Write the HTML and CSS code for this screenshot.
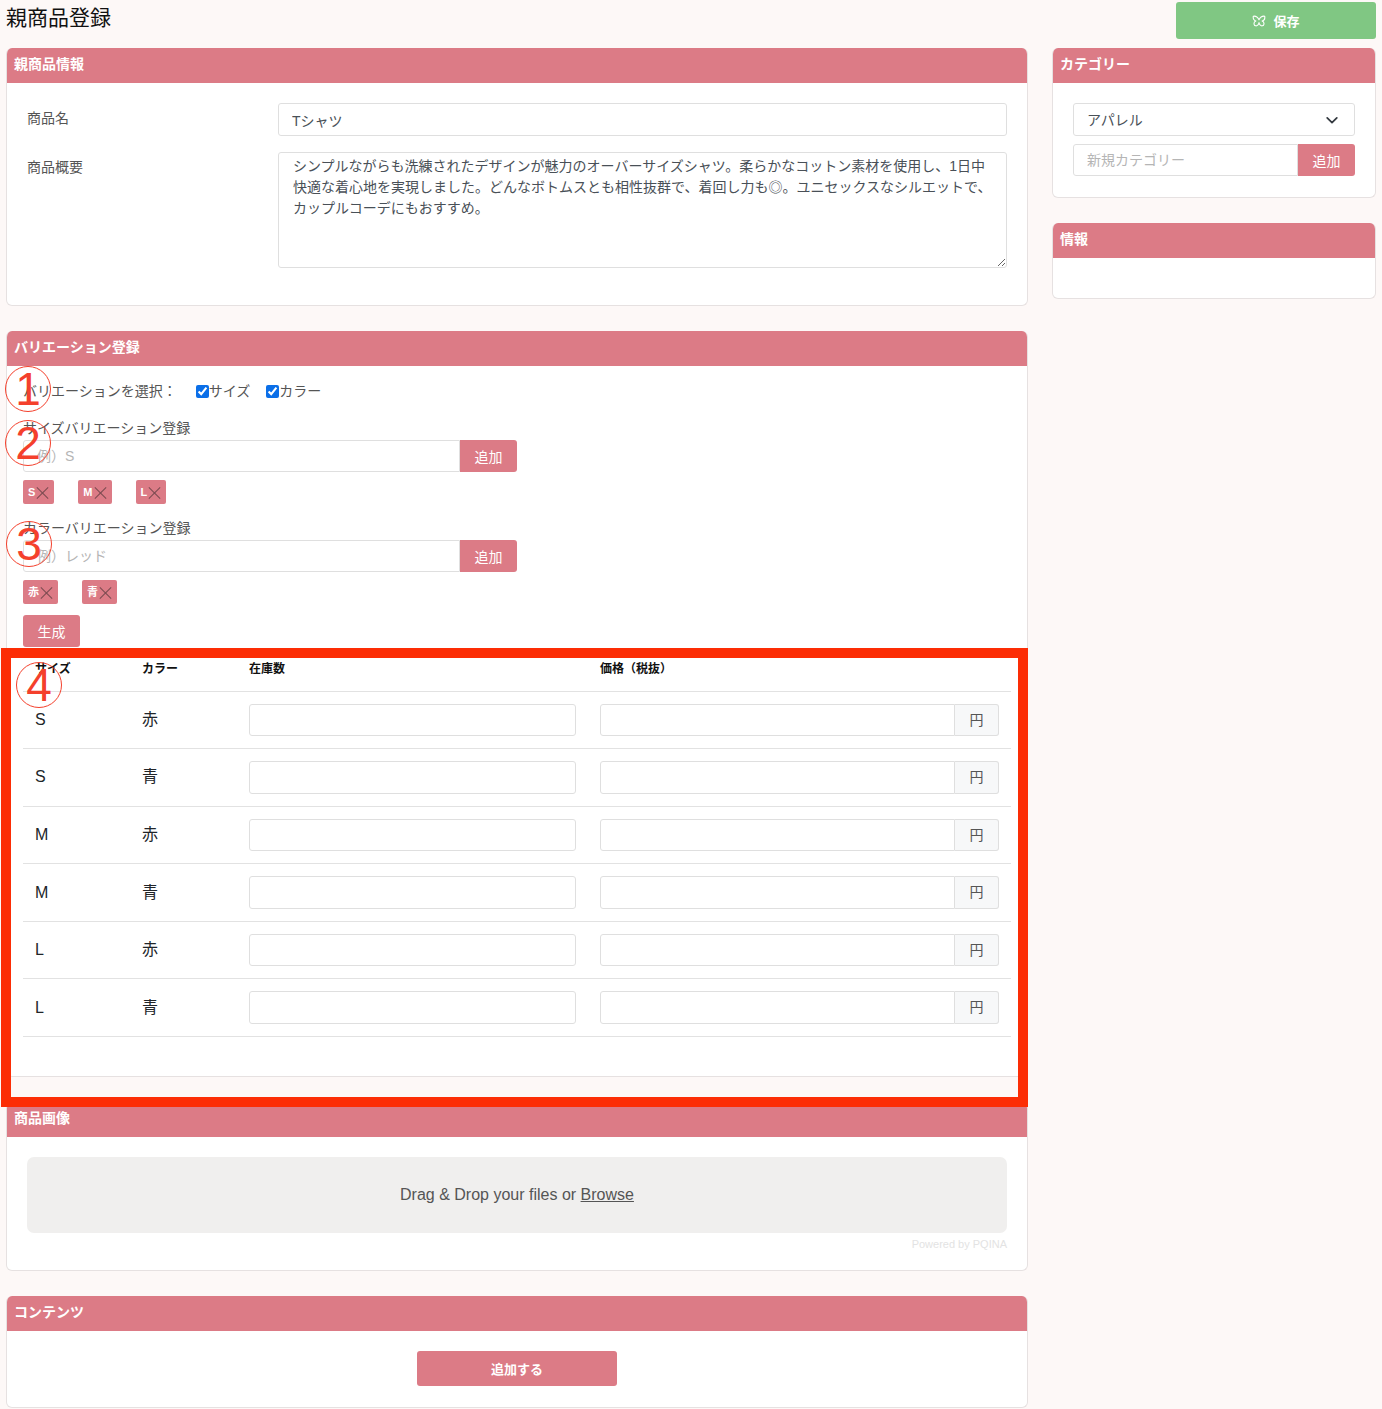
FILE: index.html
```html
<!DOCTYPE html>
<html lang="ja">
<head>
    <meta charset="UTF-8">
    <meta name="viewport" content="width=device-width, initial-scale=1.0">
    <title>親商品登録</title>
    <link rel="stylesheet" href="styles.css">
</head>
<body>
    <div class="page-top">
        <h1>親商品登録</h1>
        <button class="save-btn">
            <svg class="save-icon" viewBox="0 0 16 16" width="14" height="14" fill="none" stroke="currentColor" stroke-width="1.2" stroke-linejoin="round">
                <path d="M8 6.5C6.5 3.5 3.5 2.2 1.5 2.5 1 5 2 7.5 4.5 8 2.5 8.5 2 10 2.5 12c.5 1.8 2.8 2 4 .8.6-.6 1.2-1.8 1.5-3 .3 1.2.9 2.4 1.5 3 1.2 1.2 3.5 1 4-.8.5-2 0-3.500-2-4 2.500-.5 3.500-3 3-5.500-2-.3-5 1-6.500 4z"/>
            </svg>
            保存
        </button>
    </div>

    <div class="layout">
        <div class="main-col">
            <section class="card">
                <h2 class="card-head">親商品情報</h2>
                <div class="card-body info-body">
                    <div class="form-row name-row">
                        <label class="row-label">商品名</label>
                        <input class="field" type="text" value="Tシャツ">
                    </div>
                    <div class="form-row">
                        <label class="row-label">商品概要</label>
                        <textarea class="field summary">シンプルながらも洗練されたデザインが魅力のオーバーサイズシャツ。柔らかなコットン素材を使用し、1日中快適な着心地を実現しました。どんなボトムスとも相性抜群で、着回し力も◎。ユニセックスなシルエットで、カップルコーデにもおすすめ。</textarea>
                    </div>
                </div>
            </section>

            <section class="card">
                <h2 class="card-head">バリエーション登録</h2>
                <div class="card-body variation-body">
                    <div class="check-row">
                        <span class="check-title">バリエーションを選択：</span>
                        <label class="check-item"><input type="checkbox" checked>サイズ</label>
                        <label class="check-item"><input type="checkbox" checked>カラー</label>
                    </div>

                    <div class="group-label size-label">サイズバリエーション登録</div>
                    <div class="input-group">
                        <input class="field" type="text" placeholder="例）S">
                        <button class="add-btn">追加</button>
                    </div>
                    <div class="tags">
                        <span class="tag"><b>S</b><i class="cross"></i></span>
                        <span class="tag"><b>M</b><i class="cross"></i></span>
                        <span class="tag"><b>L</b><i class="cross"></i></span>
                    </div>

                    <div class="group-label color-label">カラーバリエーション登録</div>
                    <div class="input-group">
                        <input class="field" type="text" placeholder="例）レッド">
                        <button class="add-btn">追加</button>
                    </div>
                    <div class="tags">
                        <span class="tag"><b>赤</b><i class="cross"></i></span>
                        <span class="tag"><b>青</b><i class="cross"></i></span>
                    </div>

                    <button class="add-btn generate-btn">生成</button>

                    <table class="var-table">
                        <thead>
                            <tr>
                                <th class="col-size">サイズ</th>
                                <th class="col-color">カラー</th>
                                <th class="col-stock">在庫数</th>
                                <th>価格（税抜）</th>
                            </tr>
                        </thead>
                        <tbody>
                            <tr>
                                <td>S</td><td>赤</td>
                                <td><input class="field" type="text"></td>
                                <td><div class="price-group"><input class="field" type="text"><span class="yen">円</span></div></td>
                            </tr>
                            <tr>
                                <td>S</td><td>青</td>
                                <td><input class="field" type="text"></td>
                                <td><div class="price-group"><input class="field" type="text"><span class="yen">円</span></div></td>
                            </tr>
                            <tr>
                                <td>M</td><td>赤</td>
                                <td><input class="field" type="text"></td>
                                <td><div class="price-group"><input class="field" type="text"><span class="yen">円</span></div></td>
                            </tr>
                            <tr>
                                <td>M</td><td>青</td>
                                <td><input class="field" type="text"></td>
                                <td><div class="price-group"><input class="field" type="text"><span class="yen">円</span></div></td>
                            </tr>
                            <tr>
                                <td>L</td><td>赤</td>
                                <td><input class="field" type="text"></td>
                                <td><div class="price-group"><input class="field" type="text"><span class="yen">円</span></div></td>
                            </tr>
                            <tr>
                                <td>L</td><td>青</td>
                                <td><input class="field" type="text"></td>
                                <td><div class="price-group"><input class="field" type="text"><span class="yen">円</span></div></td>
                            </tr>
                        </tbody>
                    </table>
                </div>
            </section>

            <section class="card">
                <h2 class="card-head">商品画像</h2>
                <div class="card-body image-body">
                    <div class="dropzone">Drag &amp; Drop your files or <u>Browse</u></div>
                    <div class="powered">Powered by PQINA</div>
                </div>
            </section>

            <section class="card">
                <h2 class="card-head">コンテンツ</h2>
                <div class="card-body content-body">
                    <button class="add-content">追加する</button>
                </div>
            </section>
        </div>

        <aside class="side-col">
            <section class="card">
                <h2 class="card-head">カテゴリー</h2>
                <div class="card-body category-body">
                    <div class="select-box">
                        <span>アパレル</span>
                        <svg viewBox="0 0 16 16" width="14" height="14" fill="none" stroke="#343a40" stroke-width="2" stroke-linecap="round" stroke-linejoin="round"><path d="M2.500 5.500 8 11l5.500-5.500"/></svg>
                    </div>
                    <div class="input-group">
                        <input class="field" type="text" placeholder="新規カテゴリー">
                        <button class="add-btn">追加</button>
                    </div>
                </div>
            </section>
            <section class="card">
                <h2 class="card-head">情報</h2>
                <div class="card-body empty-body"></div>
            </section>
        </aside>
    </div>

    <!-- annotations over the screenshot -->
    <div class="note note-1">1</div>
    <div class="note note-2">2</div>
    <div class="note note-3">3</div>
    <div class="note note-4">4</div>
    <div class="note-frame"></div>
</body>
</html>
```

FILE: styles.css
```css
* {
    box-sizing: border-box;
}
body {
    font-family: "Liberation Sans", "Noto Sans CJK JP", sans-serif;
    font-size: 14px;
    line-height: 20px;
    color: #212529;
    margin: 0;
    padding: 2px 6px 0;
    background-color: #fdf8f7;
    position: relative;
}
.page-top {
    display: flex;
    justify-content: space-between;
    height: 46px;
}
h1 {
    font-size: 21px;
    font-weight: 400;
    line-height: 32px;
    margin: 0;
    color: #111;
}
.save-btn {
    width: 200px;
    height: 37px;
    display: flex;
    align-items: center;
    justify-content: center;
    gap: 7px;
    background-color: #80c783;
    color: #fff;
    border: none;
    border-radius: 3px;
    font: bold 13px "Liberation Sans", "Noto Sans CJK JP", sans-serif;
}
.layout {
    display: grid;
    grid-template-columns: 1022px 324px;
    gap: 24px;
    align-items: start;
}
.main-col,
.side-col {
    display: flex;
    flex-direction: column;
    gap: 25px;
}
.card {
    background-color: #fff;
    border: 1px solid #e6e1e1;
    border-top: none;
    border-radius: 6px;
    overflow: hidden;
}
.card-head {
    margin: 0 -1px;
    height: 35px;
    padding: 0 8px;
    font-size: 14px;
    font-weight: bold;
    line-height: 33px;
    color: #fff;
    background-color: #dc7b86;
}
.card-body {
    padding: 20px;
}
.field {
    width: 100%;
    height: 33px;
    padding: 0 13px;
    font: 14px "Liberation Sans", "Noto Sans CJK JP", sans-serif;
    color: #495057;
    background-color: #fff;
    border: 1px solid #dfdfdf;
    border-radius: 3px;
    outline: none;
}
.field::placeholder {
    color: #b5b5b5;
}

/* 親商品情報 */
.info-body {
    height: 222px;
}
.form-row {
    display: flex;
}
.name-row {
    margin-bottom: 16px;
}
.row-label {
    flex: 0 0 251px;
    line-height: 31px;
    color: #555;
}
.row-label:last-child {
    line-height: 20px;
}
.summary {
    display: block;
    height: 116px;
    padding: 3px 14px;
    line-height: 21px;
    resize: vertical;
}
.form-row:last-child .row-label {
    padding-top: 5px;
    line-height: 20px;
}

/* バリエーション */
.variation-body {
    padding: 0 16px;
    height: 710px;
}
.check-row {
    display: flex;
    align-items: center;
    height: 50px;
    color: #555;
}
.check-title {
    margin-right: 19px;
}
.check-item {
    display: flex;
    align-items: center;
    margin-right: 16px;
}
.check-item input {
    width: 13px;
    height: 13px;
    margin: 0;
    accent-color: #0b6fe8;
}
.group-label {
    height: 24px;
    line-height: 24px;
    color: #555;
}
.size-label {
    margin-top: 0;
}
.input-group {
    display: flex;
}
.input-group .field {
    flex: 1;
    height: 32px;
    border-radius: 3px 0 0 3px;
}
.variation-body .input-group {
    width: 494px;
}
.add-btn {
    flex: none;
    width: 57px;
    height: 32px;
    padding: 0;
    font: 14px "Liberation Sans", "Noto Sans CJK JP", sans-serif;
    color: #fff;
    background-color: #dc7b86;
    border: none;
    border-radius: 0 3px 3px 0;
}
.tags {
    display: flex;
    gap: 24px;
    height: 44px;
    padding-top: 8px;
}
.tag {
    display: flex;
    align-items: center;
    height: 24px;
    padding: 0 5px;
    font-size: 11px;
    color: #fff;
    background-color: #dc7b86;
    border-radius: 2px;
}
.cross {
    position: relative;
    width: 13px;
    height: 13px;
    margin-left: 1px;
}
.cross::before,
.cross::after {
    content: "";
    position: absolute;
    left: 6px;
    top: -1px;
    width: 1px;
    height: 16px;
    background-color: #7a4a50;
    transform: rotate(45deg);
}
.cross::after {
    transform: rotate(-45deg);
}
.generate-btn {
    display: block;
    height: 32px;
    margin-top: -1px;
    border-radius: 3px;
}

/* 生成テーブル */
.var-table {
    width: 988px;
    margin-top: 0;
    border-collapse: collapse;
    table-layout: fixed;
}
.var-table th {
    height: 44px;
    padding: 0 12px;
    font-size: 12px;
    font-weight: bold;
    text-align: left;
    color: #111;
    border-bottom: 1px solid #e2e2e2;
}
.col-size,
.col-color {
    width: 107px;
}
.col-stock {
    width: 351px;
}
.var-table td {
    padding: 12px;
    font-size: 16px;
    color: #212529;
    border-bottom: 1px solid #e2e2e2;
}
.var-table .field {
    display: block;
    height: 32.600px;
}
.price-group {
    display: flex;
}
.price-group .field {
    flex: 1;
    border-radius: 3px 0 0 3px;
}
.yen {
    flex: 0 0 44px;
    font-size: 14px;
    line-height: 30px;
    text-align: center;
    color: #555;
    background-color: #f7f8f9;
    border: 1px solid #dfdfdf;
    border-left: none;
    border-radius: 0 3px 3px 0;
}

/* 商品画像 */
.image-body {
    height: 133px;
}
.dropzone {
    height: 76px;
    font-size: 16px;
    line-height: 76px;
    text-align: center;
    color: #555;
    background-color: #f0efee;
    border-radius: 7px;
}
.powered {
    margin-top: 3px;
    font-size: 11px;
    line-height: 16px;
    text-align: right;
    color: #e3e3e3;
}

/* コンテンツ */
.content-body {
    height: 76px;
    display: flex;
    justify-content: center;
}
.add-content {
    width: 200px;
    height: 35px;
    font: bold 13px "Liberation Sans", "Noto Sans CJK JP", sans-serif;
    color: #fff;
    background-color: #dc7b86;
    border: none;
    border-radius: 3px;
}

/* サイド */
.category-body {
    height: 114px;
}
.select-box {
    display: flex;
    align-items: center;
    justify-content: space-between;
    height: 33px;
    padding: 0 15px 0 13px;
    margin-bottom: 8px;
    color: #495057;
    border: 1px solid #dfdfdf;
    border-radius: 3px;
}
.empty-body {
    height: 40px;
}

/* 注釈 */
.note {
    position: absolute;
    width: 46px;
    height: 46px;
    font-family: "Liberation Sans", sans-serif;
    font-size: 46px;
    font-weight: 400;
    line-height: 44px;
    text-align: center;
    color: #f4402c;
    border: 1px solid #f4402c;
    border-radius: 50%;
}
.note-1 {
    left: 5px;
    top: 366px;
}
.note-2 {
    left: 5px;
    top: 420px;
}
.note-3 {
    left: 6px;
    top: 521px;
}
.note-4 {
    left: 16px;
    top: 662px;
}
.note-frame {
    position: absolute;
    left: 1px;
    top: 648px;
    width: 1027px;
    height: 459px;
    border: 10px solid #fc2d05;
}
```
